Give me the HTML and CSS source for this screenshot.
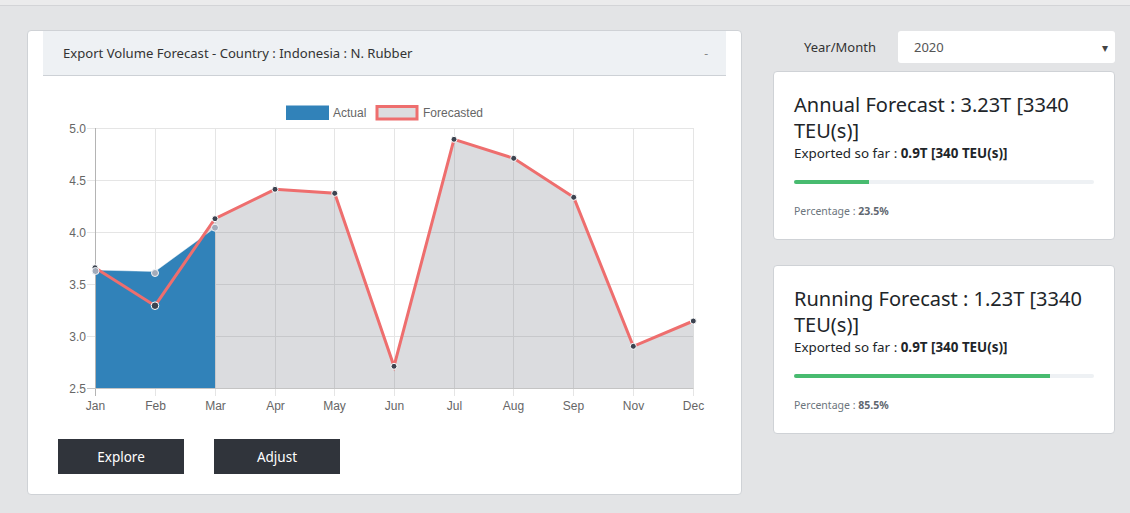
FILE: index.html
```html
<!DOCTYPE html>
<html lang="en">
<head>
<meta charset="utf-8">
<title>Export Volume Forecast</title>
<link rel="stylesheet" href="styles.css">
</head>
<body>
<div class="topbar"></div>
<div class="main">
  <section class="chart-card">
    <div class="chart-head">
      <span class="chart-title">Export Volume Forecast - Country : Indonesia : N. Rubber</span>
      <span class="collapse">-</span>
    </div>
    <svg class="chart" viewBox="43 76 684 363" width="684" height="363">
      <!-- legend -->
      <rect x="286" y="105.5" width="43" height="14.5" fill="#3182b9"/>
      <text class="lg" x="333" y="116.5">Actual</text>
      <rect x="377" y="106.5" width="40" height="12.5" fill="#dcdddf" stroke="#ee6e6e" stroke-width="3"/>
      <text class="lg" x="423" y="116.5">Forecasted</text>

      <!-- horizontal grid + y ticks -->
      <g stroke="#e5e5e5" stroke-width="1">
        <line x1="87" y1="128.5" x2="693.5" y2="128.5"/>
        <line x1="87" y1="180.5" x2="693.5" y2="180.5"/>
        <line x1="87" y1="232.5" x2="693.5" y2="232.5"/>
        <line x1="87" y1="284.5" x2="693.5" y2="284.5"/>
        <line x1="87" y1="336.5" x2="693.5" y2="336.5"/>
      </g>
      <!-- vertical grid + x ticks -->
      <g stroke="#e5e5e5" stroke-width="1">
        <line x1="155.5" y1="128" x2="155.5" y2="396"/>
        <line x1="215.5" y1="128" x2="215.5" y2="396"/>
        <line x1="275.5" y1="128" x2="275.5" y2="396"/>
        <line x1="334.5" y1="128" x2="334.5" y2="396"/>
        <line x1="394.5" y1="128" x2="394.5" y2="396"/>
        <line x1="454.5" y1="128" x2="454.5" y2="396"/>
        <line x1="513.5" y1="128" x2="513.5" y2="396"/>
        <line x1="573.5" y1="128" x2="573.5" y2="396"/>
        <line x1="633.5" y1="128" x2="633.5" y2="396"/>
        <line x1="693.5" y1="128" x2="693.5" y2="396"/>
      </g>

      <!-- forecast area -->
      <polygon fill="rgba(100,105,115,0.23)" points="95,388 95,267.7 155,305.7 215,218.7 275,189.3 334.7,193.3 394,366.3 454,139.3 513.7,158.3 573.7,197.3 633.3,346.3 693.3,321 693.3,388"/>
      <!-- actual area -->
      <polygon fill="#3182b9" points="95.5,388 95.5,270 155,271.5 215,227.7 215,388"/>
      <polyline fill="none" stroke="rgba(255,255,255,0.45)" stroke-width="1" points="95.5,270 155,271.5 215,227.7"/>

      <!-- axes -->
      <line x1="95.5" y1="128" x2="95.5" y2="396" stroke="#b4b4b4"/>
      <line x1="87" y1="388.5" x2="693.5" y2="388.5" stroke="#c4c4c4"/>

      <!-- forecast line -->
      <polyline fill="none" stroke="#ee6e6e" stroke-width="3" stroke-linejoin="miter" points="95,267.7 155,305.7 215,218.7 275,189.3 334.7,193.3 394,366.3 454,139.3 513.7,158.3 573.7,197.3 633.3,346.3 693.3,321"/>

      <!-- forecast points -->
      <g fill="#3c4350" stroke="#ffffff" stroke-width="1">
        <circle cx="95" cy="267.7" r="3"/>
        <circle cx="155" cy="305.7" r="3.8"/>
        <circle cx="215" cy="218.7" r="3"/>
        <circle cx="275" cy="189.3" r="3"/>
        <circle cx="334.7" cy="193.3" r="3"/>
        <circle cx="394" cy="366.3" r="3"/>
        <circle cx="454" cy="139.3" r="3"/>
        <circle cx="513.7" cy="158.3" r="3"/>
        <circle cx="573.7" cy="197.3" r="3"/>
        <circle cx="633.3" cy="346.3" r="3"/>
        <circle cx="693.3" cy="321" r="3"/>
      </g>
      <!-- actual points -->
      <g fill="#a2abba" stroke="#f2f4f7" stroke-width="1">
        <circle cx="95.5" cy="271" r="3.5"/>
        <circle cx="155" cy="273" r="3.5"/>
        <circle cx="215" cy="227.7" r="3.5"/>
      </g>

      <!-- y labels -->
      <g class="tick" text-anchor="end">
        <text x="86" y="132.5">5.0</text>
        <text x="86" y="184.5">4.5</text>
        <text x="86" y="236.5">4.0</text>
        <text x="86" y="288.5">3.5</text>
        <text x="86" y="340.5">3.0</text>
        <text x="86" y="392.5">2.5</text>
      </g>
      <!-- x labels -->
      <g class="tick" text-anchor="middle">
        <text x="95.5" y="409.5">Jan</text>
        <text x="155.5" y="409.5">Feb</text>
        <text x="215.5" y="409.5">Mar</text>
        <text x="275.5" y="409.5">Apr</text>
        <text x="334.5" y="409.5">May</text>
        <text x="394.5" y="409.5">Jun</text>
        <text x="454.5" y="409.5">Jul</text>
        <text x="513.5" y="409.5">Aug</text>
        <text x="573.5" y="409.5">Sep</text>
        <text x="633.5" y="409.5">Nov</text>
        <text x="693.5" y="409.5">Dec</text>
      </g>
    </svg>
    <div class="actions">
      <button class="btn">Explore</button>
      <button class="btn">Adjust</button>
    </div>
  </section>

  <aside class="side">
    <div class="period">
      <span class="period-label">Year/Month</span>
      <div class="select"><span>2020</span><span class="caret">&#9662;</span></div>
    </div>
    <div class="stat-card">
      <h4 class="stat-title">Annual Forecast : 3.23T [3340 TEU(s)]</h4>
      <p class="stat-sub">Exported so far : <b>0.9T [340 TEU(s)]</b></p>
      <div class="bar"><div class="fill" style="width:25%"></div></div>
      <p class="pct">Percentage : <b>23.5%</b></p>
    </div>
    <div class="stat-card">
      <h4 class="stat-title">Running Forecast : 1.23T [3340 TEU(s)]</h4>
      <p class="stat-sub">Exported so far : <b>0.9T [340 TEU(s)]</b></p>
      <div class="bar"><div class="fill" style="width:85.4%"></div></div>
      <p class="pct">Percentage : <b>85.5%</b></p>
    </div>
  </aside>
</div>
</body>
</html>
```

FILE: styles.css
```css
* { box-sizing: border-box; }

html, body {
  margin: 0;
  padding: 0;
}

body {
  background: #e3e4e6;
  font-family: "Noto Sans", "Open Sans", sans-serif;
  color: #212529;
  height: 513px;
  overflow: hidden;
}

.topbar {
  height: 6px;
  background: #ebebec;
  border-bottom: 1px solid #d3d4d7;
}

.main {
  display: flex;
  align-items: flex-start;
  padding: 24px 15px 0 27px;
  gap: 31px;
}

.chart-card {
  width: 715px;
  height: 465px;
  background: #fff;
  border: 1px solid #cfd2d6;
  border-radius: 4px;
  display: flex;
  flex-direction: column;
}

.chart-head {
  margin: 0 15px;
  height: 45px;
  background: #eef1f4;
  border-bottom: 1px solid #cdd1d6;
  display: flex;
  align-items: center;
  justify-content: space-between;
  padding: 0 18px 0 20px;
  font-size: 13.1px;
  color: #333;
}

.collapse {
  color: #888;
  font-size: 12px;
}

.chart {
  display: block;
  margin: 0 15px;
}

.chart text {
  font-family: "Liberation Sans", Arial, sans-serif;
  font-size: 12px;
  fill: #666;
}

.actions {
  display: flex;
  gap: 30px;
  padding-left: 30px;
}

.btn {
  width: 126px;
  height: 35px;
  border: 0;
  border-radius: 0;
  background: #30343b;
  color: #fff;
  font-family: "Noto Sans", "Open Sans", sans-serif;
  font-size: 13.5px;
  padding: 0;
}

.side {
  width: 342px;
  display: flex;
  flex-direction: column;
}

.period {
  display: flex;
  align-items: center;
  padding-left: 31px;
  gap: 22px;
  height: 32px;
  margin-top: 1px;
}

.period-label {
  font-size: 13px;
  color: #333;
}

.select {
  flex: 1;
  height: 32px;
  background: #fff;
  border-radius: 3px;
  display: flex;
  align-items: center;
  justify-content: space-between;
  padding: 0 7px 0 16px;
  font-size: 13px;
  color: #555;
}

.caret {
  font-size: 12px;
  color: #444;
}

.stat-card {
  margin-top: 8px;
  background: #fff;
  border: 1px solid #cfd2d6;
  border-radius: 4px;
  padding: 20px 20px 21px;
}

.stat-card + .stat-card {
  margin-top: 25px;
}

.stat-title {
  margin: 0;
  font-weight: 400;
  font-size: 20px;
  line-height: 26px;
  color: #212529;
}

.stat-sub {
  margin: 0;
  font-size: 13.4px;
  line-height: 18px;
}

.stat-sub b {
  font-weight: 700;
}

.bar {
  margin-top: 18px;
  height: 4px;
  background: #eef1f4;
  border-radius: 2px;
  overflow: hidden;
}

.fill {
  height: 100%;
  background: #48bb6f;
}

.pct {
  margin: 20px 0 0;
  font-size: 10.5px;
  line-height: 14px;
  color: #6c757d;
}

.pct b {
  font-weight: 700;
  color: #5f6770;
}
```
